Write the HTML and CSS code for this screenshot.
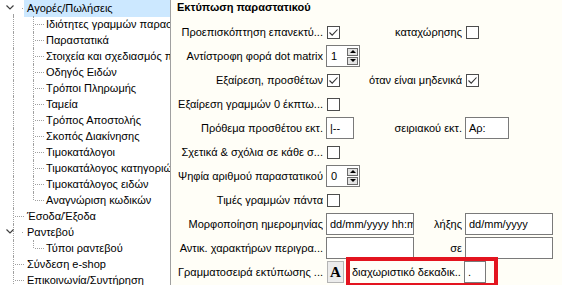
FILE: index.html
```html
<!DOCTYPE html>
<html lang="el">
<head>
<meta charset="UTF-8">
<title>Ρυθμίσεις</title>
<link rel="stylesheet" href="styles.css">
</head>
<body>

<div class="app">
  <div class="tree">
    <div class="t-row lvl1">
      <span class="g-out g-root"></span>
      <svg class="chev" width="8" height="5" viewBox="0 0 8 5"><path d="M0.5 0.5 L4 4 L7.5 0.5" fill="none" stroke="#404040" stroke-width="1.2"/></svg>
      <span class="g-dot"></span>
      <span class="t-label selected">Αγορές/Πωλήσεις</span>
    </div>
    <div class="t-row lvl2"><span class="g-out"></span><span class="g-in"></span><span class="g-h2"></span><span class="t-label">Ιδιότητες γραμμών παραστατικών</span></div>
    <div class="t-row lvl2"><span class="g-out"></span><span class="g-in"></span><span class="g-h2"></span><span class="t-label">Παραστατικά</span></div>
    <div class="t-row lvl2"><span class="g-out"></span><span class="g-in"></span><span class="g-h2"></span><span class="t-label">Στοιχεία και σχεδιασμός παραστατικών</span></div>
    <div class="t-row lvl2"><span class="g-out"></span><span class="g-in"></span><span class="g-h2"></span><span class="t-label">Οδηγός Ειδών</span></div>
    <div class="t-row lvl2"><span class="g-out"></span><span class="g-in"></span><span class="g-h2"></span><span class="t-label">Τρόποι Πληρωμής</span></div>
    <div class="t-row lvl2"><span class="g-out"></span><span class="g-in"></span><span class="g-h2"></span><span class="t-label">Ταμεία</span></div>
    <div class="t-row lvl2"><span class="g-out"></span><span class="g-in"></span><span class="g-h2"></span><span class="t-label">Τρόπος Αποστολής</span></div>
    <div class="t-row lvl2"><span class="g-out"></span><span class="g-in"></span><span class="g-h2"></span><span class="t-label">Σκοπός Διακίνησης</span></div>
    <div class="t-row lvl2"><span class="g-out"></span><span class="g-in"></span><span class="g-h2"></span><span class="t-label">Τιμοκατάλογοι</span></div>
    <div class="t-row lvl2"><span class="g-out"></span><span class="g-in"></span><span class="g-h2"></span><span class="t-label">Τιμοκατάλογος κατηγοριών</span></div>
    <div class="t-row lvl2"><span class="g-out"></span><span class="g-in"></span><span class="g-h2"></span><span class="t-label">Τιμοκατάλογος ειδών</span></div>
    <div class="t-row lvl2"><span class="g-out"></span><span class="g-in last"></span><span class="g-h2"></span><span class="t-label">Αναγνώριση κωδικών</span></div>
    <div class="t-row lvl1"><span class="g-out"></span><span class="g-h1"></span><span class="t-label">Έσοδα/Έξοδα</span></div>
    <div class="t-row lvl1">
      <span class="g-out"></span>
      <svg class="chev" width="8" height="5" viewBox="0 0 8 5"><path d="M0.5 0.5 L4 4 L7.5 0.5" fill="none" stroke="#404040" stroke-width="1.2"/></svg>
      <span class="g-dot"></span>
      <span class="t-label">Ραντεβού</span>
    </div>
    <div class="t-row lvl2"><span class="g-out"></span><span class="g-in last"></span><span class="g-h2"></span><span class="t-label">Τύποι ραντεβού</span></div>
    <div class="t-row lvl1"><span class="g-out"></span><span class="g-h1"></span><span class="t-label">Σύνδεση e-shop</span></div>
    <div class="t-row lvl1"><span class="g-out"></span><span class="g-h1"></span><span class="t-label">Επικοινωνία/Συντήρηση</span></div>
  </div>

  <div class="panel">
    <div class="section-title">Εκτύπωση παραστατικού</div>

    <div class="form-row">
      <span class="lbl">Προεπισκόπτηση επανεκτύ...</span>
      <span class="ctl"><span class="chk"><svg width="11" height="11" viewBox="0 0 11 11"><path d="M1.5 5.5 L4.2 8.2 L9.5 2.5" fill="none" stroke="#333" stroke-width="1.1"/></svg></span></span>
      <span class="lbl2">καταχώρησης</span>
      <span class="ctl2"><span class="chk"></span></span>
    </div>

    <div class="form-row">
      <span class="lbl">Αντίστροφη φορά dot matrix</span>
      <span class="ctl">
        <span class="spin"><span class="spin-val">1</span><span class="spin-btns"><span class="sb up"></span><span class="sb down"></span></span></span>
      </span>
    </div>

    <div class="form-row">
      <span class="lbl">Εξαίρεση, προσθέτων</span>
      <span class="ctl"><span class="chk"><svg width="11" height="11" viewBox="0 0 11 11"><path d="M1.5 5.5 L4.2 8.2 L9.5 2.5" fill="none" stroke="#333" stroke-width="1.1"/></svg></span></span>
      <span class="lbl2">όταν είναι μηδενικά</span>
      <span class="ctl2"><span class="chk"><svg width="11" height="11" viewBox="0 0 11 11"><path d="M1.5 5.5 L4.2 8.2 L9.5 2.5" fill="none" stroke="#333" stroke-width="1.1"/></svg></span></span>
    </div>

    <div class="form-row">
      <span class="lbl">Εξαίρεση γραμμών 0 έκπτω...</span>
      <span class="ctl"><span class="chk"></span></span>
    </div>

    <div class="form-row">
      <span class="lbl">Πρόθεμα προσθέτου εκτ.</span>
      <span class="ctl"><span class="field w-xs">|--</span></span>
      <span class="lbl2">σειριακού εκτ.</span>
      <span class="ctl2"><span class="field w-sm">Αρ:</span></span>
    </div>

    <div class="form-row">
      <span class="lbl">Σχετικά &amp; σχόλια σε κάθε σ...</span>
      <span class="ctl"><span class="chk"></span></span>
    </div>

    <div class="form-row">
      <span class="lbl">Ψηφία αριθμού παραστατικού</span>
      <span class="ctl">
        <span class="spin"><span class="spin-val">0</span><span class="spin-btns"><span class="sb up"></span><span class="sb down"></span></span></span>
      </span>
    </div>

    <div class="form-row">
      <span class="lbl">Τιμές γραμμών πάντα</span>
      <span class="ctl"><span class="chk"></span></span>
    </div>

    <div class="form-row">
      <span class="lbl">Μορφοποίηση ημερομηνίας</span>
      <span class="ctl"><span class="field w-md">dd/mm/yyyy hh:mm</span></span>
      <span class="lbl2">λήξης</span>
      <span class="ctl2"><span class="field w-md">dd/mm/yyyy</span></span>
    </div>

    <div class="form-row">
      <span class="lbl">Αντικ. χαρακτήρων περιγρα...</span>
      <span class="ctl"><span class="field w-md"></span></span>
      <span class="lbl2">σε</span>
      <span class="ctl2"><span class="field w-md"></span></span>
    </div>

    <div class="form-row">
      <span class="lbl">Γραμματοσειρά εκτύπωσης ...</span>
      <span class="ctl"><span class="font-btn">A</span></span>
      <span class="highlight">
        <span class="lbl2">διαχωριστικό δεκαδικ...</span>
        <span class="field w-dot">.</span>
      </span>
    </div>
  </div>
</div>

</body>
</html>
```

FILE: styles.css
```css
body {
  margin: 0;
  font-family: "Liberation Sans", Arial, sans-serif;
  font-size: 11px;
  color: #000;
  overflow: hidden;
}

.app {
  display: flex;
  height: 285px;
  overflow: hidden;
}

/* drzewo po lewej */
.tree {
  width: 170px;
  flex: none;
  background: #fff;
  border-right: 1px solid #a0a0a0;
  overflow: hidden;
}

.t-row {
  position: relative;
  height: 16px;
  display: flex;
  align-items: center;
  white-space: nowrap;
}

.lvl1 {
  padding-left: 24px;
}

.lvl2 {
  padding-left: 43px;
}

.t-label {
  padding: 0 3px;
  line-height: 16px;
}

.t-label.selected {
  flex: 1;
  background: #cce8ff;
  height: 17px;
  line-height: 16px;
}

.chev {
  position: absolute;
  left: 6px;
  top: 5px;
}

.g-out {
  position: absolute;
  left: 13px;
  top: 0;
  bottom: 0;
  border-left: 1px dotted #a0a0a0;
}

.g-out.g-root {
  top: 14px;
}

.g-in {
  position: absolute;
  left: 33px;
  top: 0;
  bottom: 0;
  border-left: 1px dotted #a0a0a0;
}

.g-in.last {
  bottom: 8px;
}

.g-h1 {
  position: absolute;
  left: 15px;
  width: 9px;
  top: 8px;
  border-top: 1px dotted #a0a0a0;
}

.g-h2 {
  position: absolute;
  left: 35px;
  width: 9px;
  top: 8px;
  border-top: 1px dotted #a0a0a0;
}

.g-dot {
  position: absolute;
  left: 22px;
  top: 8px;
  width: 1px;
  height: 1px;
  background: #a0a0a0;
}

/* panel ustawień */
.panel {
  flex: 1;
  background: #fffef7;
  padding-left: 6px;
}

.section-title {
  font-weight: bold;
  height: 20px;
  line-height: 15px;
}

.form-row {
  display: flex;
  align-items: center;
  height: 24px;
  width: 376px;
  white-space: nowrap;
}

.lbl {
  width: 146px;
  margin-right: 3px;
  flex: none;
  text-align: right;
  overflow: hidden;
}

.ctl {
  flex: none;
  display: flex;
  align-items: center;
}

.lbl2 {
  flex: 1;
  margin-right: 3px;
  text-align: right;
  overflow: hidden;
}

.ctl2 {
  width: 88px;
  flex: none;
  display: flex;
  align-items: center;
}

.chk {
  width: 13px;
  height: 13px;
  box-sizing: border-box;
  margin-left: 1px;
  border: 1px solid #4d4d4d;
  background: #fff;
  display: flex;
  align-items: center;
  justify-content: center;
}

.field {
  height: 22px;
  box-sizing: border-box;
  border: 1px solid #7a7a7a;
  background: #fff;
  padding: 3px 0 0 3px;
  overflow: hidden;
  line-height: 14px;
}

.w-xs { width: 28px; }
.w-sm { width: 44px; }
.w-md { width: 88px; }
.w-dot { width: 22px; flex: none; }

.spin {
  width: 34px;
  height: 22px;
  box-sizing: border-box;
  border: 1px solid #7a7a7a;
  background: #fff;
  display: flex;
  align-items: center;
  justify-content: space-between;
  padding: 0 1px 0 4px;
}

.spin-btns {
  display: flex;
  flex-direction: column;
  gap: 1px;
}

.sb {
  width: 11px;
  height: 8px;
  box-sizing: border-box;
  border: 1px solid #6a6a6a;
  background: #e3e3e3;
  display: flex;
  align-items: center;
  justify-content: center;
}

.sb::after {
  content: "";
  border-left: 3px solid transparent;
  border-right: 3px solid transparent;
}

.sb.up::after {
  border-bottom: 3px solid #000;
}

.sb.down::after {
  border-top: 3px solid #000;
}

.font-btn {
  width: 17px;
  height: 22px;
  box-sizing: border-box;
  margin-left: 1px;
  border: 1px solid #b4b4b4;
  background: #ececec;
  font-family: "Liberation Serif", "Times New Roman", serif;
  font-weight: bold;
  font-size: 15px;
  line-height: 20px;
  text-align: center;
}

/* czerwone obramowanie zaznaczenia */
.highlight {
  width: 152px;
  height: 30px;
  box-sizing: border-box;
  margin-left: 2px;
  border: 4px solid #e3141f;
  display: flex;
  align-items: center;
  padding: 0 8px 0 2px;
  flex: none;
}
```
